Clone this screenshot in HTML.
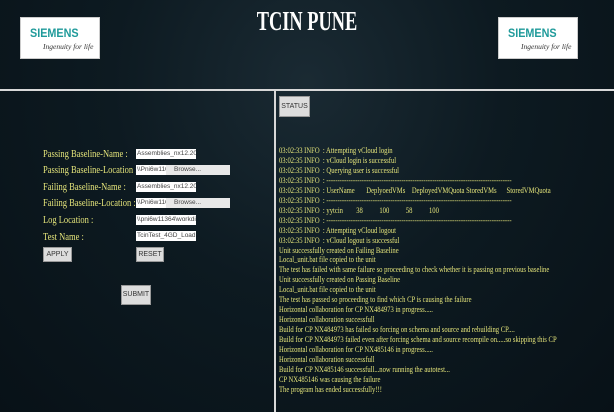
<!DOCTYPE html>
<html><head><meta charset="utf-8"><style>
*{margin:0;padding:0;box-sizing:border-box}
body{width:614px;height:412px;overflow:hidden;background:#0b161d;position:relative;font-family:"Liberation Serif",serif}
.bg{position:absolute;inset:0;background:radial-gradient(ellipse at 50% 20%,#1a2a33 0%,#0d1a21 45%,#081117 100%)}
.logo{position:absolute;top:17px;width:80px;height:42px;background:#fff;border:1px solid #ccc}
.logo .s{position:absolute;left:9px;top:8px;font:bold 12px "Liberation Sans",sans-serif;color:#1f9a9a;transform:scaleX(0.9);transform-origin:left}
.logo .t{position:absolute;left:22px;top:24px;font:italic 7.5px "Liberation Serif",serif;color:#333}
h1{position:absolute;left:0;width:614px;top:6px;text-align:center;color:#fff;font:bold 27px "Liberation Serif",serif;transform:scaleX(0.68)}
.hl{position:absolute;left:0;top:89px;width:614px;height:2px;background:#d8d8d8}
.vl{position:absolute;left:274px;top:91px;width:2px;height:321px;background:#d8d8d8}
.lbl{position:absolute;left:43px;color:#e4e47a;font-size:11px;white-space:nowrap;transform:scaleX(0.77);transform-origin:left}
.in{position:absolute;left:136px;height:10px;background:#fff;font:6.5px "Liberation Sans",sans-serif;color:#444;padding-left:1px;line-height:10px;overflow:hidden;white-space:nowrap;width:60px}
.br{position:absolute;left:166px;height:10px;background:#e8e8e8;font:6.5px "Liberation Sans",sans-serif;color:#444;padding-left:8px;line-height:10px;width:64px}
.btn{position:absolute;background:#ddd;border:1px solid #999;font:7px "Liberation Sans",sans-serif;color:#333;text-align:center}
.log{position:absolute;left:279px;top:146px;color:#e4e47a;font-size:8.6px;line-height:9.95px;white-space:pre;transform:scaleX(0.77);transform-origin:left}
</style></head><body>
<div class="bg"></div>
<div class="logo" style="left:20px"><div class="s">SIEMENS</div><div class="t">Ingenuity for life</div></div>
<div class="logo" style="left:498px"><div class="s">SIEMENS</div><div class="t">Ingenuity for life</div></div>
<h1>TCIN PUNE</h1>
<div class="hl"></div><div class="vl"></div>

<div class="lbl" style="top:148px">Passing Baseline-Name :</div>
<div class="in" style="top:149px;width:60px">Assemblies_nx12.2017</div>
<div class="lbl" style="top:164px">Passing Baseline-Location :</div>
<div class="in" style="top:165px;width:30px">\\Pni6w11052\nx12\Buil</div><div class="br" style="top:165px">Browse...</div>
<div class="lbl" style="top:181px">Failing Baseline-Name :</div>
<div class="in" style="top:182px;width:60px">Assemblies_nx12.2017</div>
<div class="lbl" style="top:197px">Failing Baseline-Location :</div>
<div class="in" style="top:198px;width:30px">\\Pni6w11052\nx12\Buil</div><div class="br" style="top:198px">Browse...</div>
<div class="lbl" style="top:214px">Log Location :</div>
<div class="in" style="top:215px;width:60px">\\pni6w11364\workdir\a</div>
<div class="lbl" style="top:231px">Test Name :</div>
<div class="in" style="top:231px;width:60px">TcinTest_4GD_Load ×</div>
<div class="btn" style="left:43px;top:247px;width:29px;height:15px;line-height:13px">APPLY</div>
<div class="btn" style="left:136px;top:247px;width:28px;height:15px;line-height:13px">RESET</div>
<div class="btn" style="left:121px;top:285px;width:30px;height:20px;line-height:18px">SUBMIT</div>
<div class="btn" style="left:279px;top:96px;width:31px;height:21px;line-height:19px">STATUS</div>

<div class="log">03:02:33 INFO  : Attempting vCloud login
03:02:35 INFO  : vCloud login is successful
03:02:35 INFO  : Querying user is successful
03:02:35 INFO  : ------------------------------------------------------------------------------------
03:02:35 INFO  : UserName       DeplyoedVMs    DeployedVMQuota StoredVMs      StoredVMQuota
03:02:35 INFO  : ------------------------------------------------------------------------------------
03:02:35 INFO  : yytcin        38          100          58          100
03:02:35 INFO  : ------------------------------------------------------------------------------------
03:02:35 INFO  : Attempting vCloud logout
03:02:35 INFO  : vCloud logout is successful
Unit successfully created on Failing Baseline
Local_unit.bat file copied to the unit
The test has failed with same failure so proceeding to check whether it is passing on previous baseline
Unit successfully created on Passing Baseline
Local_unit.bat file copied to the unit
The test has passed so proceeding to find which CP is causing the failure
Horizontal collaboration for CP NX484973 in progress.....
Horizontal collaboration successfull
Build for CP NX484973 has failed so forcing on schema and source and rebuilding CP....
Build for CP NX484973 failed even after forcing schema and source recompile on.....so skipping this CP
Horizontal collaboration for CP NX485146 in progress.....
Horizontal collaboration successfull
Build for CP NX485146 successfull...now running the autotest...
CP NX485146 was causing the failure
The program has ended successfully!!!</div>
</body></html>
